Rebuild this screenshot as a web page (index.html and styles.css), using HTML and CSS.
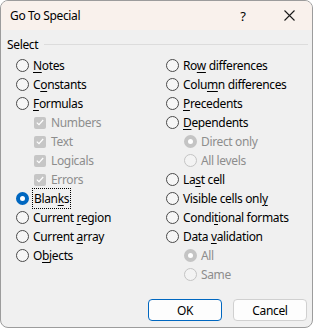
FILE: index.html
```html
<!DOCTYPE html>
<html lang="en">
<head>
    <meta charset="UTF-8">
    <title>Go To Special</title>
    <link rel="stylesheet" href="styles.css">
</head>
<body>
    <div class="window">
        <div class="titlebar">
            <span class="title">Go To Special</span>
            <span class="help">?</span>
            <span class="close">
                <svg width="11" height="11" viewBox="0 0 11 11"><path d="M0.5 0.5 L10.5 10.5 M10.5 0.5 L0.5 10.5" stroke="#1a1a1a" stroke-width="1.1"/></svg>
            </span>
        </div>
        <div class="content">
            <div class="legend">
                <span>Select</span>
                <div class="rule"></div>
            </div>
            <div class="columns">
                <div class="col">
                    <div class="item"><span class="radio"></span><span><u>N</u>otes</span></div>
                    <div class="item"><span class="radio"></span><span>C<u>o</u>nstants</span></div>
                    <div class="item"><span class="radio"></span><span><u>F</u>ormulas</span></div>
                    <div class="item sub off"><span class="check"><svg width="8" height="7" viewBox="0 0 8 7"><path d="M0.8 3.6 L3 5.7 L7.2 1" fill="none" stroke="#fff" stroke-width="1.2"/></svg></span><span>Numbers</span></div>
                    <div class="item sub off"><span class="check"><svg width="8" height="7" viewBox="0 0 8 7"><path d="M0.8 3.6 L3 5.7 L7.2 1" fill="none" stroke="#fff" stroke-width="1.2"/></svg></span><span>Text</span></div>
                    <div class="item sub off"><span class="check"><svg width="8" height="7" viewBox="0 0 8 7"><path d="M0.8 3.6 L3 5.7 L7.2 1" fill="none" stroke="#fff" stroke-width="1.2"/></svg></span><span>Logicals</span></div>
                    <div class="item sub off"><span class="check"><svg width="8" height="7" viewBox="0 0 8 7"><path d="M0.8 3.6 L3 5.7 L7.2 1" fill="none" stroke="#fff" stroke-width="1.2"/></svg></span><span>Errors</span></div>
                    <div class="item"><span class="radio on"></span><span class="focus">Blan<u>k</u>s</span></div>
                    <div class="item"><span class="radio"></span><span>Current <u>r</u>egion</span></div>
                    <div class="item"><span class="radio"></span><span>Current <u>a</u>rray</span></div>
                    <div class="item"><span class="radio"></span><span>O<u>b</u>jects</span></div>
                </div>
                <div class="col">
                    <div class="item"><span class="radio"></span><span>Ro<u>w</u> differences</span></div>
                    <div class="item"><span class="radio"></span><span>Colu<u>m</u>n differences</span></div>
                    <div class="item"><span class="radio"></span><span><u>P</u>recedents</span></div>
                    <div class="item"><span class="radio"></span><span><u>D</u>ependents</span></div>
                    <div class="item sub off"><span class="radio on"></span><span>Direct only</span></div>
                    <div class="item sub off"><span class="radio"></span><span>All levels</span></div>
                    <div class="item"><span class="radio"></span><span>La<u>s</u>t cell</span></div>
                    <div class="item"><span class="radio"></span><span>Visible cells onl<u>y</u></span></div>
                    <div class="item"><span class="radio"></span><span>Condi<u>t</u>ional formats</span></div>
                    <div class="item"><span class="radio"></span><span>Data <u>v</u>alidation</span></div>
                    <div class="item sub off"><span class="radio on"></span><span>All</span></div>
                    <div class="item sub off"><span class="radio"></span><span>Same</span></div>
                </div>
            </div>
        </div>
        <div class="footer">
            <button class="btn default">OK</button>
            <button class="btn">Cancel</button>
        </div>
    </div>
</body>
</html>
```

FILE: styles.css
```css
body {
    margin: 0;
    background: #ffffff;
    font-family: "Noto Sans", "Open Sans", sans-serif;
    font-size: 12px;
    letter-spacing: -0.35px;
    color: #000;
}
.window {
    width: 313px;
    height: 328px;
    box-sizing: border-box;
    border: 1px solid #9c9c9c;
    border-radius: 8px;
    overflow: hidden;
    background: #f0f0f0;
    display: flex;
    flex-direction: column;
}
.titlebar {
    height: 29px;
    background: #f9f1ec;
    display: flex;
    align-items: center;
    padding-left: 9px;
}
.title {
    flex: 1;
    font-size: 12px;
}
.help {
    width: 46px;
    text-align: center;
    font-size: 13px;
}
.close {
    width: 46px;
    display: flex;
    justify-content: center;
    align-items: center;
}
.content {
    flex: 1;
    padding: 7px 4px 0 6px;
}
.legend {
    display: flex;
    align-items: center;
    gap: 6px;
    height: 14px;
}
.rule {
    flex: 1;
    height: 1px;
    background: #dcdcdc;
}
.columns {
    display: grid;
    grid-template-columns: 150px 1fr;
    padding: 5px 0 0 9px;
}
.item {
    height: 19px;
    display: flex;
    align-items: center;
    gap: 4px;
    white-space: nowrap;
}
.item u {
    text-underline-offset: 2px;
}
.sub {
    padding-left: 18px;
}
.off {
    color: #8d8d8d;
}
.radio {
    width: 13px;
    height: 13px;
    box-sizing: border-box;
    border: 1px solid #4a4a4a;
    border-radius: 50%;
    background: #f6f6f6;
    flex: none;
}
.radio.on {
    border: 4px solid #0067c0;
    background: #fff;
}
.off .radio {
    border-color: #c4c4c4;
    background: #f3f3f3;
}
.off .radio.on {
    border: 4px solid #c4c4c4;
    background: #fff;
}
.check {
    width: 12px;
    height: 12px;
    border-radius: 2px;
    background: #c6c6c6;
    display: flex;
    align-items: center;
    justify-content: center;
    flex: none;
    margin-right: 1px;
}
.focus {
    outline: 1px dotted #000;
    outline-offset: 1px;
    margin-left: 1px;
}
.footer {
    display: flex;
    justify-content: flex-end;
    gap: 11px;
    padding: 0 5px 6px 0;
}
.btn {
    width: 74px;
    height: 22px;
    border: 1px solid #d0d0d0;
    border-radius: 4px;
    background: #fdfdfd;
    font-family: inherit;
    font-size: 12px;
    letter-spacing: inherit;
    color: #000;
    padding: 0;
}
.btn.default {
    border-color: #0067c0;
}
```
